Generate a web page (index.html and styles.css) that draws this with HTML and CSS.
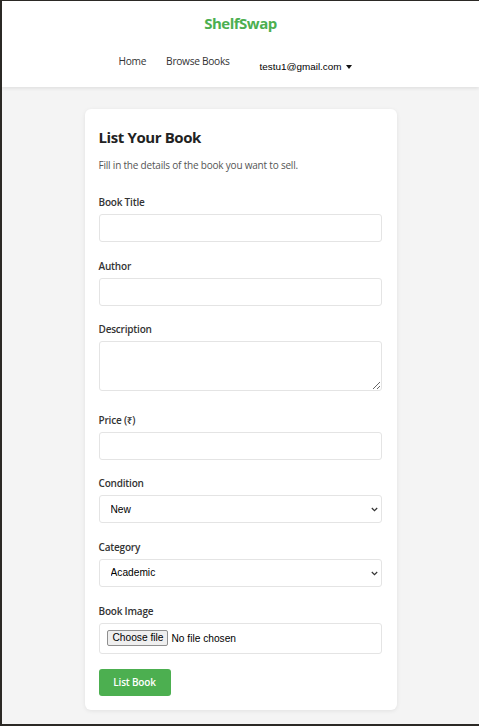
FILE: index.html
```html
<!DOCTYPE html>
<html lang="en">
<head>
<meta charset="utf-8">
<title>ShelfSwap - List Your Book</title>
<link rel="stylesheet" href="styles.css">
</head>
<body>
<div class="frame">
  <header class="site-header">
    <div class="logo">ShelfSwap</div>
    <nav class="nav">
      <a class="nav-link" href="#">Home</a>
      <a class="nav-link" href="#">Browse Books</a>
      <div class="user">testu1@gmail.com <span class="caret"></span></div>
    </nav>
  </header>
  <main class="page">
    <form class="card">
      <h1 class="title">List Your Book</h1>
      <p class="subtitle">Fill in the details of the book you want to sell.</p>

      <div class="field">
        <label class="label">Book Title</label>
        <input class="control" type="text">
      </div>
      <div class="field">
        <label class="label">Author</label>
        <input class="control" type="text">
      </div>
      <div class="field">
        <label class="label">Description</label>
        <textarea class="control textarea"></textarea>
      </div>
      <div class="field">
        <label class="label">Price (₹)</label>
        <input class="control" type="text">
      </div>
      <div class="field">
        <label class="label">Condition</label>
        <div class="select-wrap">
          <select class="control select"><option>New</option></select>
          <svg class="chev" width="7" height="5" viewBox="0 0 7 5"><path d="M0.8 1 L3.5 3.6 L6.2 1" fill="none" stroke="#333" stroke-width="1.2"/></svg>
        </div>
      </div>
      <div class="field">
        <label class="label">Category</label>
        <div class="select-wrap">
          <select class="control select"><option>Academic</option></select>
          <svg class="chev" width="7" height="5" viewBox="0 0 7 5"><path d="M0.8 1 L3.5 3.6 L6.2 1" fill="none" stroke="#333" stroke-width="1.2"/></svg>
        </div>
      </div>
      <div class="field field-last">
        <label class="label">Book Image</label>
        <label class="control file-box">
          <input type="file" class="file-hidden">
          <span class="file-btn">Choose file</span>
          <span class="file-name">No file chosen</span>
        </label>
      </div>
      <button type="button" class="submit">List Book</button>
    </form>
  </main>
</div>
</body>
</html>
```

FILE: styles.css
```css
html, body {
  margin: 0;
  padding: 0;
}
body {
  font-family: "Open Sans", "Noto Sans", sans-serif;
  background: #2b2925;
}
.frame {
  box-sizing: border-box;
  height: 726px;
  border-left: 2px solid #2b2925;
  border-top: 1px solid #2b2925;
  border-bottom: 2px solid #2b2925;
  background: #f4f4f4;
  overflow: hidden;
  display: flex;
  flex-direction: column;
}
.site-header {
  background: #fff;
  box-shadow: 0 2px 3px rgba(0,0,0,0.07);
  padding: 12px 0 13px;
  display: flex;
  flex-direction: column;
  align-items: center;
  position: relative;
  z-index: 1;
}
.logo {
  color: #4caf50;
  font-weight: 700;
  font-size: 15px;
  line-height: 20px;
  letter-spacing: -0.5px;
}
.nav {
  margin-top: 21px;
  display: flex;
  align-items: flex-start;
  font-size: 10.2px;
  letter-spacing: -0.3px;
  line-height: 15px;
  padding-right: 10px;
}
.nav-link {
  color: #333;
  text-decoration: none;
  margin-right: 20px;
}
.nav-link + .nav-link {
  margin-right: 30px;
}
.user {
  font-family: "Liberation Sans", Arial, sans-serif;
  font-size: 9.9px;
  letter-spacing: 0;
  color: #000;
  padding-top: 5px;
  display: flex;
  align-items: center;
}
.caret {
  display: inline-block;
  margin-left: 5px;
  width: 0;
  height: 0;
  border-left: 3.5px solid transparent;
  border-right: 3.5px solid transparent;
  border-top: 4px solid #111;
  margin-top: 1px;
}
.page {
  padding-top: 22px;
  display: flex;
  justify-content: center;
}
.card {
  box-sizing: border-box;
  width: 312px;
  background: #fff;
  border-radius: 6px;
  box-shadow: 0 1px 4px rgba(0,0,0,0.08);
  padding: 18px 15px 14px 14px;
  display: flex;
  flex-direction: column;
  align-items: flex-start;
}
.title {
  margin: 0;
  font-size: 15px;
  line-height: 20px;
  font-weight: 700;
  letter-spacing: -0.4px;
  color: #222;
}
.subtitle {
  margin: 11px 0 22px;
  font-size: 10px;
  letter-spacing: -0.2px;
  line-height: 15px;
  color: #555;
}
.field {
  align-self: stretch;
  display: flex;
  flex-direction: column;
  margin-bottom: 16.6px;
}
.field-last {
  margin-bottom: 15px;
}
.label {
  font-size: 10px;
  letter-spacing: -0.2px;
  line-height: 15px;
  font-weight: 600;
  color: #333;
  margin-bottom: 4px;
}
.control {
  box-sizing: border-box;
  width: 100%;
  height: 28px;
  border: 1px solid #e4e4e4;
  border-radius: 3px;
  background: #fff;
  font-family: "Liberation Sans", Arial, sans-serif;
  font-size: 10.2px;
  color: #000;
  margin: 0;
  outline: none;
}
.textarea {
  height: 50px;
  resize: vertical;
  margin-bottom: 5px;
}
.select-wrap {
  position: relative;
}
.select {
  appearance: none;
  -webkit-appearance: none;
  padding: 0 6px 0 11px;
  display: block;
}
.chev {
  position: absolute;
  right: 4px;
  top: 12px;
  pointer-events: none;
}
.file-box {
  height: 31px;
  padding: 0 7px;
  display: flex;
  align-items: center;
  font-size: 10.2px;
}
.file-hidden {
  display: none;
}
.file-btn {
  box-sizing: border-box;
  height: 16px;
  line-height: 14px;
  padding: 0 4px 0 5px;
  background: #efefef;
  border: 1px solid #8f8f8f;
  border-radius: 2px;
  color: #000;
}
.file-name {
  margin-left: 3px;
  color: #000;
}
.submit {
  box-sizing: border-box;
  width: 72px;
  height: 27px;
  background: #4caf50;
  color: #fff;
  border: none;
  border-radius: 3px;
  font-family: "Open Sans", sans-serif;
  font-size: 10px;
  letter-spacing: -0.2px;
  font-weight: 600;
  padding: 0;
}
```
